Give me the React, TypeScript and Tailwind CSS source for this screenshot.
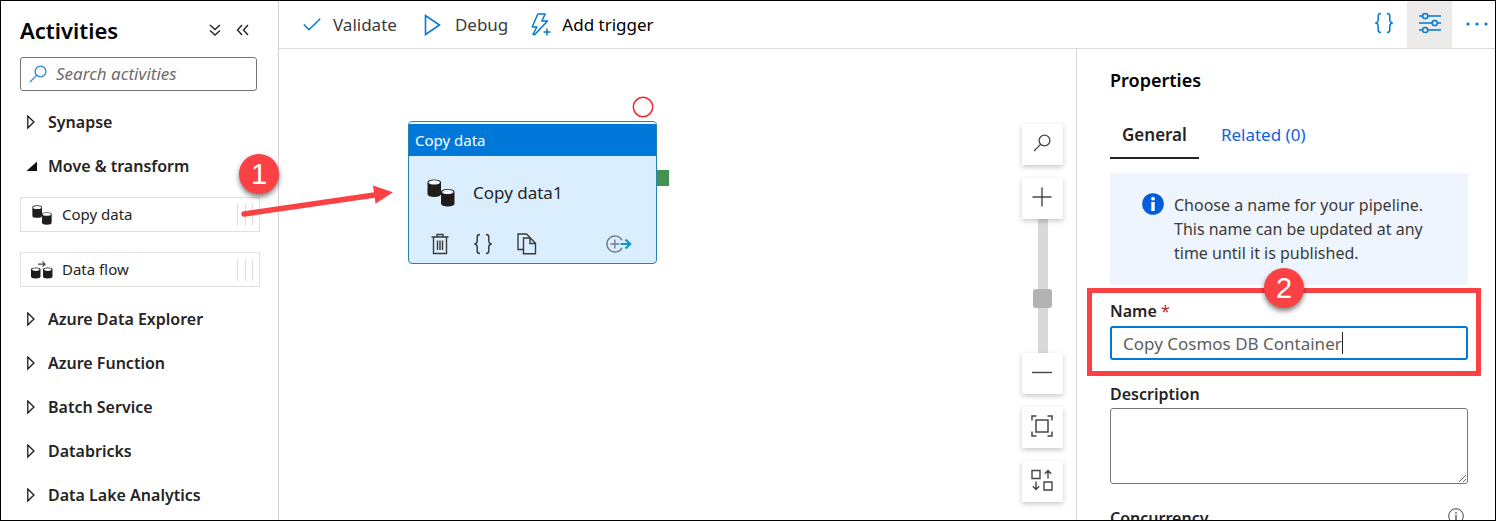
import React from "react";

type IconProps = { className?: string };

function Braces({ className }: IconProps) {
  return (
    <svg className={className} width="20" height="22" viewBox="0 0 20 22" fill="none" stroke="currentColor" strokeWidth="1.5" aria-hidden="true">
      <path d="M7 1.5C4.6 1.5 4.2 2.6 4.2 4v3.6C4.2 9.4 3.4 11 1.2 11c2.2 0 3 1.6 3 3.4V18c0 1.400.4 2.500 2.800 2.500" />
      <path d="M13 1.5c2.400 0 2.800 1.100 2.800 2.500v3.600c0 1.800.8 3.400 3 3.400-2.200 0-3 1.600-3 3.400V18c0 1.400-.4 2.500-2.800 2.500" />
    </svg>
  );
}

function SearchGlyph({ className }: IconProps) {
  return (
    <svg className={className} width="18" height="18" viewBox="0 0 18 18" fill="none" stroke="currentColor" strokeWidth="1.3" aria-hidden="true">
      <circle cx="11.500" cy="6.500" r="5.400" />
      <path d="M7.600 10.400 1 17" />
    </svg>
  );
}

function Cylinder({ x, y, w, h }: { x: number; y: number; w: number; h: number }) {
  const r = w / 2;
  const e = w * 0.2;
  return (
    <g>
      <path
        d={`M${x} ${y + e}a${r} ${e} 0 0 1 ${w} 0v${h - 2 * e}a${r} ${e} 0 0 1 ${-w} 0z`}
        fill="#1f1c1d"
      />
      <ellipse cx={x + r} cy={y + e + 0.2} rx={r - 1} ry={e - 0.6} fill="#f6f9fb" />
    </g>
  );
}

function CopyDataIcon({ className }: IconProps) {
  return (
    <svg className={className} viewBox="0 0 28 28" aria-hidden="true">
      <Cylinder x={0.5} y={0.5} w={13.500} h={17.500} />
      <Cylinder x={14} y={10} w={13.500} h={17.500} />
    </svg>
  );
}

function DataFlowIcon() {
  return (
    <svg width="22" height="18" viewBox="0 0 22 18" aria-hidden="true">
      <Cylinder x={0} y={6.500} w={9.500} h={11} />
      <Cylinder x={12} y={6.500} w={9.500} h={11} />
      <path d="M7 3.200h7M11.500.7 14 3.200l-2.500 2.500" fill="none" stroke="#444" strokeWidth="1.200" />
    </svg>
  );
}

function GroupRow({ label, open = false }: { label: string; open?: boolean }) {
  return (
    <button type="button" aria-expanded={open} className="flex h-11 w-full items-center gap-[11px] pl-1.5 text-left">
      <svg width="11" height="15" viewBox="0 0 11 15" className="shrink-0" aria-hidden="true">
        {open ? (
          <path d="M11 2.500v9.500H.5z" fill="#111" />
        ) : (
          <path d="M1.800 1v12L8 7z" fill="none" stroke="#1b1a19" strokeWidth="1.300" />
        )}
      </svg>
      <span className="text-base font-semibold">{label}</span>
    </button>
  );
}

function ActivityCard({ label, icon }: { label: string; icon: React.ReactNode }) {
  return (
    <div className="flex h-[35px] items-center border border-[#e1e1e1] pr-[6px] pl-[10px]">
      <span className="flex w-[31px] shrink-0">{icon}</span>
      <span className="flex-1 text-[15px]">{label}</span>
      <span className="flex h-[22px] w-4 justify-between" aria-hidden="true">
        <i className="w-px bg-[#dcdcdc]" />
        <i className="w-px bg-[#dcdcdc]" />
        <i className="w-px bg-[#dcdcdc]" />
      </span>
    </div>
  );
}

function Sidebar() {
  return (
    <aside className="flex w-[278px] shrink-0 flex-col overflow-hidden border-r border-[#d2d2d2] pr-[18px] pl-[19px]">
      <div className="flex h-14 shrink-0 items-center pt-[2px]">
        <h1 className="flex-1 text-[22px] font-semibold text-black">Activities</h1>
        <button type="button" aria-label="Expand all" className="mr-[15px]">
          <svg width="12" height="13" viewBox="0 0 12 13" fill="none" stroke="#222" strokeWidth="1.400" aria-hidden="true">
            <path d="M1 1l5 4.500L11 1M1 6.500 6 11l5-4.500" />
          </svg>
        </button>
        <button type="button" aria-label="Collapse panel" className="mr-[11px]">
          <svg width="13" height="12" viewBox="0 0 13 12" fill="none" stroke="#222" strokeWidth="1.400" aria-hidden="true">
            <path d="M6 1 1.500 6 6 11M12 1 7.500 6 12 11" />
          </svg>
        </button>
      </div>
      <label className="mr-[3px] flex h-[34px] shrink-0 items-center rounded-[3px] border border-[#767676] pl-2 text-[#2b88d8]">
        <SearchGlyph className="shrink-0" />
        <input
          type="text"
          aria-label="Search activities"
          placeholder="Search activities"
          className="min-w-0 flex-1 pl-[9px] text-[17px] text-[#605e5c] italic outline-none placeholder:text-[#6e6c6a]"
        />
      </label>
      <nav className="mt-[9px] flex flex-col text-[#252423]">
        <GroupRow label="Synapse" />
        <GroupRow label="Move & transform" open />
        <div className="mt-[9px] mb-[10px] flex flex-col gap-5">
          <ActivityCard label="Copy data" icon={<CopyDataIcon className="ml-px size-5" />} />
          <ActivityCard label="Data flow" icon={<DataFlowIcon />} />
        </div>
        <GroupRow label="Azure Data Explorer" />
        <GroupRow label="Azure Function" />
        <GroupRow label="Batch Service" />
        <GroupRow label="Databricks" />
        <GroupRow label="Data Lake Analytics" />
      </nav>
    </aside>
  );
}

function Toolbar() {
  return (
    <header className="flex h-12 shrink-0 items-stretch border-b border-[#dcdcdc] pl-6 text-[17px] text-[#3b3a39]">
      <button type="button" className="mr-[27px] flex items-center gap-3">
        <svg width="18" height="13" viewBox="0 0 18 13" fill="none" stroke="#0078d4" strokeWidth="1.500" aria-hidden="true">
          <path d="M.8 6.500 6 11.800 17.200.8" />
        </svg>
        Validate
      </button>
      <button type="button" className="mr-[23px] flex items-center gap-[14px]">
        <svg width="17" height="22" viewBox="0 0 17 22" fill="none" stroke="#0078d4" strokeWidth="1.600" aria-hidden="true">
          <path d="M1.500 1.500v19L15.500 11z" />
        </svg>
        Debug
      </button>
      <button type="button" className="flex items-center gap-[11px] text-black">
        <svg width="20" height="23" viewBox="0 0 20 23" fill="none" stroke="#0078d4" strokeWidth="1.500" aria-hidden="true">
          <path d="M6.800 1h7.400l-3.400 7h5.700L3.800 21.500H2L5.800 14H1.200z" strokeLinejoin="round" />
          <path d="M16 15.500v7M12.500 19h7" />
        </svg>
        Add trigger
      </button>
      <div className="ml-auto flex text-[#0078d4]">
        <button type="button" aria-label="View code" className="flex w-[46px] items-center justify-center pb-[3px]">
          <Braces />
        </button>
        <button type="button" aria-label="Toggle properties" className="flex w-[45px] items-center justify-center bg-[#edebe9] pb-1">
          <svg width="22" height="20" viewBox="0 0 22 20" fill="none" stroke="currentColor" strokeWidth="1.500" aria-hidden="true">
            <path d="M0 3h3.500M9 3h13M0 10h13M18.500 10H22M0 17h3.500M9 17h13" />
            <circle cx="6.200" cy="3" r="2.600" />
            <circle cx="15.700" cy="10" r="2.600" />
            <circle cx="6.200" cy="17" r="2.600" />
          </svg>
        </button>
        <button type="button" aria-label="More" className="flex w-[43px] items-center justify-end pr-[7px] pb-[2px]">
          <svg width="22" height="4" viewBox="0 0 22 4" fill="currentColor" aria-hidden="true">
            <circle cx="2" cy="2" r="1.600" />
            <circle cx="11" cy="2" r="1.600" />
            <circle cx="20" cy="2" r="1.600" />
          </svg>
        </button>
      </div>
    </header>
  );
}

function PipelineNode() {
  return (
    <div className="absolute top-[72px] left-[129px] w-[249px]">
      <div className="overflow-hidden rounded-[4px] border border-[#2585a8] bg-[#dbeefe] text-[#252423]">
        <div className="flex h-[34px] items-center border-t-2 border-[#eef8ff] bg-[#0078d9] pl-[6px] text-[15px] text-white">Copy data</div>
        <div className="flex h-[74px] items-center gap-[18px] pl-[18px]">
          <CopyDataIcon className="size-7" />
          <span className="text-[17px]">Copy data1</span>
        </div>
        <div className="flex h-[33px] items-start gap-[24px] pt-[3px] pr-[24px] pl-[22px] text-[#3b3a39]">
          <button type="button" aria-label="Delete">
            <svg width="18" height="22" viewBox="0 0 18 22" fill="none" stroke="currentColor" strokeWidth="1.400" aria-hidden="true">
              <path d="M.5 4h17M6 4V1.500h6V4M2.500 4v16.500h13V4M6.500 7.500V17M9 7.500V17M11.500 7.500V17" />
            </svg>
          </button>
          <button type="button" aria-label="Code">
            <Braces />
          </button>
          <button type="button" aria-label="Clone">
            <svg width="20" height="22" viewBox="0 0 20 22" fill="none" stroke="currentColor" strokeWidth="1.400" aria-hidden="true">
              <path d="M6.500 16.500H1V1h8.500l3.500 3.500" />
              <path d="M6.500 5h6.800l5.200 5.200v10.500h-12zM13 5v5.500h5.500" />
            </svg>
          </button>
          <button type="button" aria-label="Add output" className="ml-auto">
            <svg width="26" height="22" viewBox="0 0 26 22" fill="none" aria-hidden="true">
              <path d="M16 7.200A8 8 0 1 0 16 14.800M8.800 6.500v9M4.300 11h9" stroke="#6f7b8c" strokeWidth="1.400" />
              <path d="M14.500 11h9.500M19.500 6.500 24.200 11l-4.700 4.500" stroke="#0f9bc4" strokeWidth="2.200" />
            </svg>
          </button>
        </div>
      </div>
      <svg width="22" height="22" viewBox="0 0 22 22" className="absolute -top-[25px] right-[3px]" aria-hidden="true">
        <circle cx="11" cy="11" r="9.700" fill="#fff" stroke="#f4262a" strokeWidth="1.500" />
      </svg>
      <span className="absolute top-[49px] -right-3 h-4 w-3 bg-[#45914f]" />
    </div>
  );
}

function CanvasButton({ label, children }: { label: string; children: React.ReactNode }) {
  return (
    <button type="button" aria-label={label} className="relative flex size-[41px] items-center justify-center bg-white pr-px pb-1 text-[#484644] shadow-[0_2px_5px_rgba(0,0,0,0.22)]">
      {children}
    </button>
  );
}

function ZoomControls() {
  return (
    <div className="ml-auto flex flex-col items-center pt-[75px] pr-[13px]">
      <CanvasButton label="Search canvas">
        <SearchGlyph />
      </CanvasButton>
      <div className="mt-[13px] flex flex-col items-center">
        <CanvasButton label="Zoom in">
          <svg width="20" height="20" viewBox="0 0 20 20" stroke="currentColor" strokeWidth="1.400" aria-hidden="true">
            <path d="M10 .5v19M.5 10h19" />
          </svg>
        </CanvasButton>
        <div className="flex h-[134px] w-[10px] items-center justify-center bg-[#d8d8d8]">
          <span className="mt-[24px] size-[19px] shrink-0 rounded-[3px] bg-[#b3b3b3]" />
        </div>
        <CanvasButton label="Zoom out">
          <svg width="20" height="20" viewBox="0 0 20 20" stroke="currentColor" strokeWidth="1.400" aria-hidden="true">
            <path d="M0 10.500h20" />
          </svg>
        </CanvasButton>
      </div>
      <div className="mt-[13px] flex flex-col gap-[13px]">
        <CanvasButton label="Zoom to fit">
          <svg width="22" height="22" viewBox="0 0 22 22" fill="none" stroke="currentColor" strokeWidth="1.500" aria-hidden="true">
            <path d="M5 5h12v12H5zM1 5.500V1h4.500M16.500 1H21v4.500M21 16.500V21h-4.500M5.500 21H1v-4.500" />
          </svg>
        </CanvasButton>
        <CanvasButton label="Auto align">
          <svg width="22" height="22" viewBox="0 0 22 22" fill="none" stroke="currentColor" strokeWidth="1.400" aria-hidden="true">
            <path d="M1 1.500h8v8H1zM13 13h8v8h-8zM17 9.500v-8M13.800 4.700 17 1.500l3.200 3.200M5 12.500v8M1.800 17.300 5 20.500l3.200-3.200" />
          </svg>
        </CanvasButton>
      </div>
    </div>
  );
}

function StepBadge({ step, className }: { step: number; className: string }) {
  return (
    <span className={`absolute z-10 flex size-10 items-center justify-center rounded-full bg-[#fc4145] font-['Liberation_Sans',sans-serif] text-[29px] leading-none text-white shadow-[0_3px_5px_rgba(0,0,0,0.5)] ${className}`}>
      {step}
    </span>
  );
}

function PropertiesPanel() {
  return (
    <section className="w-[419px] shrink-0 border-l border-[#d8d8d8] pt-[19px] pr-[27px] pl-[33px] text-[#252423]">
      <h2 className="text-lg leading-6 font-semibold text-black">Properties</h2>
      <div role="tablist" className="mt-5 flex gap-[10px] text-[17px] leading-6">
        <button type="button" role="tab" aria-selected="true" className="border-b-2 border-[#252423] px-3 pt-[11px] pb-[10px] font-semibold">
          General
        </button>
        <button type="button" role="tab" aria-selected="false" className="border-b-2 border-transparent px-3 pt-[11px] pb-[10px] text-[#0f62e0]">
          Related (0)
        </button>
      </div>
      <div className="mt-[14px] flex items-start gap-[10px] bg-[#eff5fe] py-5 pr-6 pl-8">
        <svg width="22" height="22" viewBox="0 0 22 22" className="shrink-0" aria-hidden="true">
          <circle cx="11" cy="11" r="10.800" fill="#015cda" />
          <circle cx="11" cy="5.700" r="1.900" fill="#fff" />
          <path d="M9.300 9h3.400v9H9.300z" fill="#fff" />
        </svg>
        <p className="text-base leading-6 text-[#3b3a39]">
          Choose a name for your pipeline. This name can be updated at any time until it is published.
        </p>
      </div>
      <div className="relative mt-[14px]">
        <label htmlFor="pipeline-name" className="block text-base leading-6 font-semibold">
          Name <span className="font-normal text-[#b02a30]">*</span>
        </label>
        <div className="relative mt-[3px]">
          <input
            id="pipeline-name"
            type="text"
            defaultValue="Copy Cosmos DB Container"
            className="block h-[34px] w-full rounded-[3px] border-2 border-[#0078d4] pl-[11px] text-[17px] text-[#605e5c] outline-none"
          />
          <span className="absolute top-[6px] left-[232px] h-[22px] w-px bg-[#252423]" aria-hidden="true" />
        </div>
        <div className="pointer-events-none absolute -top-[11px] -right-[13px] -bottom-4 -left-[23px] border-[5px] border-[#fc4145]" />
        <StepBadge step={2} className="-top-[31px] left-[154px]" />
      </div>
      <label htmlFor="pipeline-description" className="mt-[22px] block text-base leading-6 font-semibold">
        Description
      </label>
      <textarea id="pipeline-description" className="mt-[2px] block h-[76px] w-full resize rounded-[3px] border border-[#767676] outline-none" />
      <div className="mt-[22px] flex items-start justify-between pr-1 text-base leading-6 font-semibold">
        <span>Concurrency</span>
        <svg width="16" height="16" viewBox="0 0 16 16" fill="none" stroke="#484644" className="mt-[2px]" aria-hidden="true">
          <circle cx="8" cy="8" r="7.300" />
          <path d="M8 6.800V12M8 4v1.500" strokeWidth="1.300" />
        </svg>
      </div>
    </section>
  );
}

export default function App() {
  return (
    <div className="relative flex h-screen overflow-hidden border border-black bg-white font-['Noto_Sans',sans-serif]">
      <Sidebar />
      <div className="flex min-w-0 flex-1 flex-col">
        <Toolbar />
        <div className="flex min-h-0 flex-1">
          <main className="relative flex min-w-0 flex-1">
            <PipelineNode />
            <ZoomControls />
          </main>
          <PropertiesPanel />
        </div>
      </div>
      <svg width="160" height="40" viewBox="0 0 160 40" className="pointer-events-none absolute top-[180px] left-[237px]" aria-hidden="true">
        <path d="M6 33 140 13.500" stroke="#fc4145" strokeWidth="5.500" strokeLinecap="round" />
        <path d="M135 4.500 155 11.200l-17.500 11.500z" fill="#fc4145" />
      </svg>
      <StepBadge step={1} className="top-[153px] left-[238px]" />
    </div>
  );
}
